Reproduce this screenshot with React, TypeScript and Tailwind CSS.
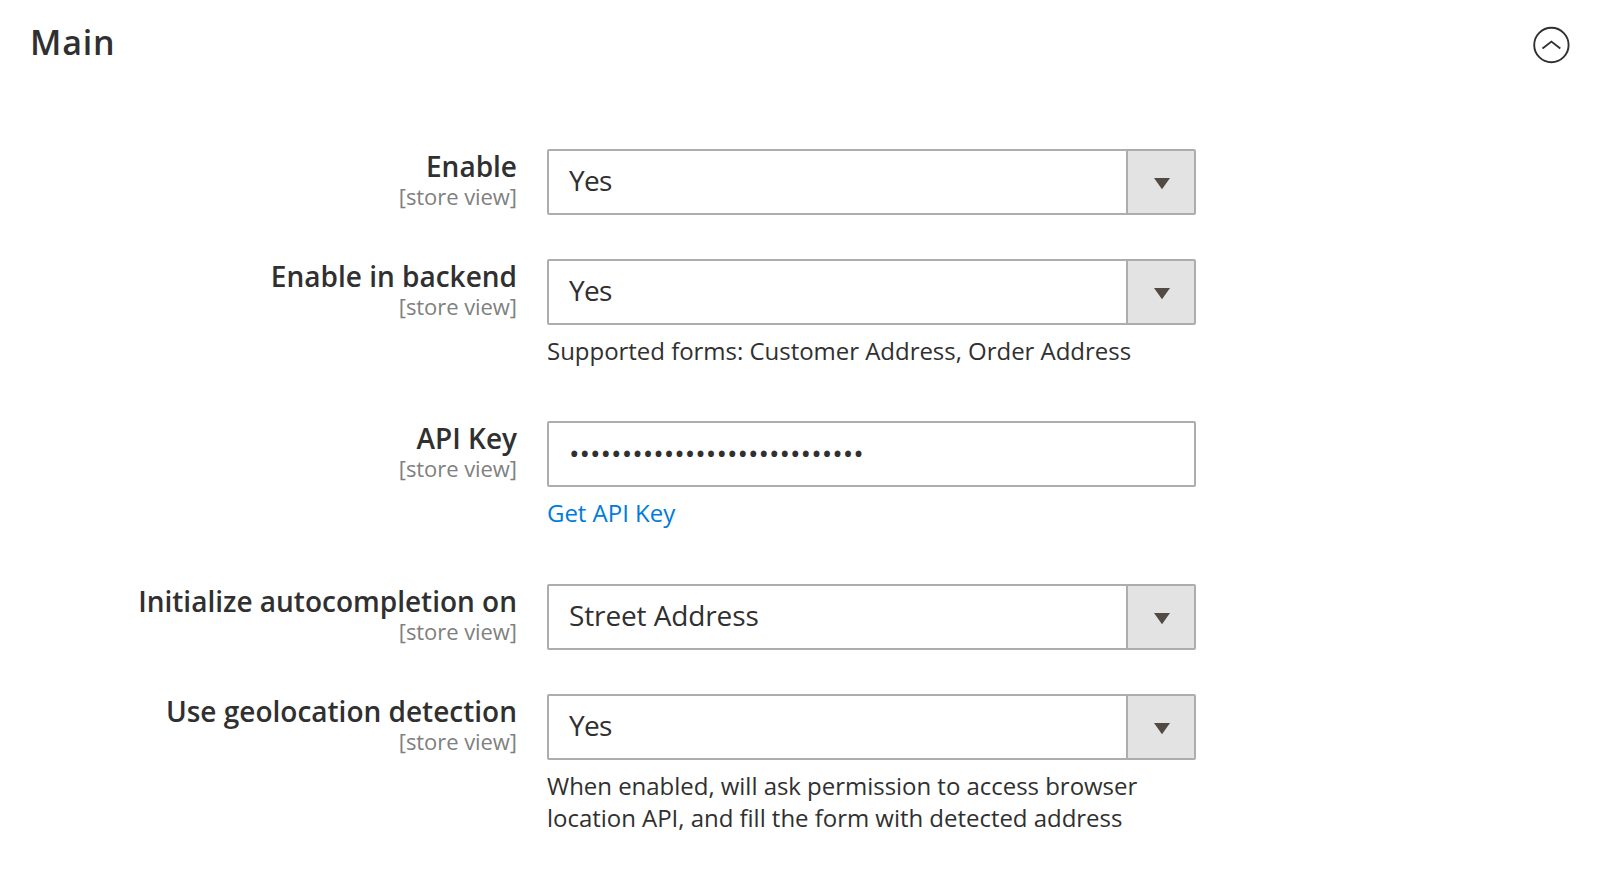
import type { ReactNode } from 'react';

type FieldProps = { label: string; height: string; children: ReactNode; note?: ReactNode };

function Field({ label, height, children, note }: FieldProps) {
  return (
    <div className={`flex ${height}`}>
      <div className="-mt-px w-[517px] shrink-0 text-right">
        <div className="text-[28px] leading-[36px] font-semibold">{label}</div>
        <div className="text-[22px] leading-[24px] tracking-[-0.06px] text-[#808080]">[store view]</div>
      </div>
      <div className="ml-[30px] w-[650px]">
        {children}
        {note && (
          <div className="mt-[10px] text-[24px] leading-[32px] tracking-[-0.03px] whitespace-nowrap">{note}</div>
        )}
      </div>
    </div>
  );
}

function Select({ value, tracking = 'tracking-[-0.7px]' }: { value: string; tracking?: string }) {
  return (
    <div className="flex h-[66px] w-[649px] rounded-[2px] border-2 border-[#adadad] text-[28px]">
      <div className={`flex-1 pl-[20px] leading-[58px] ${tracking}`}>{value}</div>
      <div className="flex w-[68px] items-center justify-center border-l-2 border-[#adadad] bg-[#e3e3e3]">
        <svg width="16" height="12" viewBox="0 0 16 12" className="mt-[4px] ml-px">
          <path d="M0 0H16L8 11.3Z" fill="#514943" />
        </svg>
      </div>
    </div>
  );
}

export default function App() {
  return (
    <div className="h-[884px] w-[1603px] overflow-hidden bg-white font-['Open_Sans',sans-serif] text-[#303030]">
      <header className="flex h-[149px] items-start justify-between pr-[33px] pl-[30px]">
        <h1 className="mt-[18px] text-[34px] leading-[48px] font-semibold tracking-[0.85px]">Main</h1>
        <svg
          width="38"
          height="38"
          viewBox="0 0 38 38"
          fill="none"
          stroke="#303030"
          strokeWidth="1.9"
          className="mt-[26px]"
        >
          <circle cx="19.4" cy="19" r="17.2" />
          <path d="M10.5 22.4L19.4 15.6L28.3 22.4" />
        </svg>
      </header>
      <Field label="Enable" height="h-[110px]">
        <Select value="Yes" />
      </Field>
      <Field label="Enable in backend" height="h-[162px]" note="Supported forms: Customer Address, Order Address">
        <Select value="Yes" />
      </Field>
      <Field label="API Key" height="h-[163px]" note={<a className="text-[#007bdb]">Get API Key</a>}>
        <div className="h-[66px] w-[649px] rounded-[2px] border-2 border-[#adadad] pl-[20px] text-[28px] leading-[60px]">
          ••••••••••••••••••••••••••••
        </div>
      </Field>
      <Field label="Initialize autocompletion on" height="h-[110px]">
        <Select value="Street Address" tracking="tracking-[-0.12px]" />
      </Field>
      <Field
        label="Use geolocation detection"
        height="h-[162px]"
        note={
          <>
            When enabled, will ask permission to access browser
            <br />
            location API, and fill the form with detected address
          </>
        }
      >
        <Select value="Yes" />
      </Field>
    </div>
  );
}
